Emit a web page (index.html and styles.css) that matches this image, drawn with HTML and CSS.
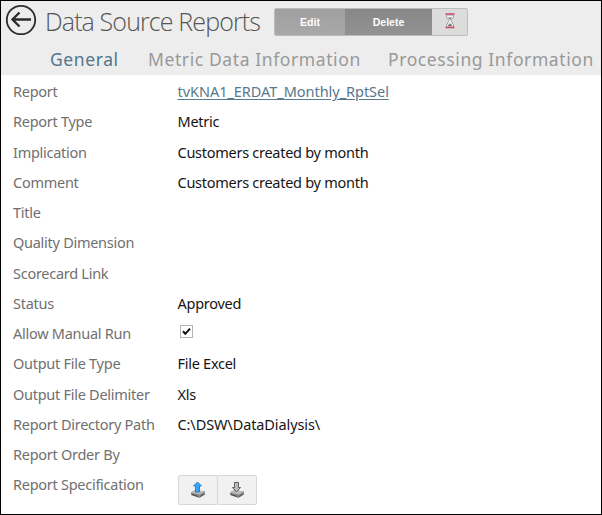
FILE: index.html
```html
<!DOCTYPE html>
<html lang="en">
<head>
<meta charset="utf-8">
<title>Data Source Reports</title>
<link rel="stylesheet" href="styles.css">
</head>
<body>
<main class="window">
  <header class="header">
    <div class="title-bar">
      <svg class="back" viewBox="0 0 32 32" role="img" aria-label="Back"><circle cx="16" cy="16" r="14.2"/><path d="M26 15.5H7.5M14.5 8.5l-7 7 7 7"/></svg>
      <h1 class="title">Data Source Reports</h1>
      <div class="actions">
        <button class="btn edit">Edit</button>
        <button class="btn delete">Delete</button>
        <button class="btn wait" aria-label="Queue">
          <svg width="10" height="16" viewBox="0 0 10 16"><path d="M1.5 2h7v2L6 7.5 8.5 12v2h-7v-2L4 7.5 1.5 4z" fill="#f4f4f4" stroke="#a2a2a2"/><path d="M3 4.5h4L5 7zM2.5 13 5 10l2.5 3z" fill="#777"/><path d="M.5 1h9M.5 14.5h9" stroke="#c94a62" stroke-width="1.6"/></svg>
        </button>
      </div>
    </div>
    <nav class="tabs"><a class="tab active">General</a><a class="tab metric">Metric Data Information</a><a class="tab processing">Processing Information</a></nav>
  </header>
  <dl class="fields">
    <dt>Report</dt><dd><a class="link">tvKNA1_ERDAT_Monthly_RptSel</a></dd>
    <dt>Report Type</dt><dd>Metric</dd>
    <dt>Implication</dt><dd>Customers created by month</dd>
    <dt>Comment</dt><dd>Customers created by month</dd>
    <dt>Title</dt><dd></dd>
    <dt>Quality Dimension</dt><dd></dd>
    <dt>Scorecard Link</dt><dd></dd>
    <dt>Status</dt><dd>Approved</dd>
    <dt>Allow Manual Run</dt><dd><svg class="check" viewBox="0 0 13 13"><rect x=".5" y=".5" width="12" height="12"/><path d="M3 6.3 5.3 8.8 10 3.6"/></svg></dd>
    <dt>Output File Type</dt><dd>File Excel</dd>
    <dt>Output File Delimiter</dt><dd>Xls</dd>
    <dt>Report Directory Path</dt><dd class="path">C:\DSW\DataDialysis\</dd>
    <dt>Report Order By</dt><dd></dd>
    <dt>Report Specification</dt>
    <dd class="files">
      <button class="file-btn" aria-label="Upload"><svg width="16" height="18" viewBox="0 0 16 18"><path d="M1 11.5 5 9l10 1.5v3L9.5 17 1 14z" fill="#888"/><path d="M1 11.5 5 9l10 1.5-5.5 3z" fill="#bbb"/><path d="M2 13.5l6 2" stroke="#444"/><path d="M10 15.5l4.5-2.5" stroke="#555"/><path d="M7.5 1 11.5 5H9.5v6h-4V5h-2z" fill="#38a5fa" stroke="#1c70ba" stroke-width=".8"/></svg></button>
      <button class="file-btn" aria-label="Download"><svg width="16" height="18" viewBox="0 0 16 18"><path d="M1 11.5 5 9l10 1.5v3L9.5 17 1 14z" fill="#888"/><path d="M1 11.5 5 9l10 1.5-5.5 3z" fill="#bbb"/><path d="M2 13.5l6 2" stroke="#444"/><path d="M10 15.5l4.5-2.5" stroke="#555"/><path d="M5.5 1.5h4v5h2l-4 4.5-4-4.5h2z" fill="#bbb" stroke="#555" stroke-width=".9"/></svg></button>
    </dd>
  </dl>
</main>
</body>
</html>
```

FILE: styles.css
```css
* { box-sizing: border-box; }
body { margin: 0; font-family: "Noto Sans", sans-serif; }
.window { width: 602px; height: 515px; border: 1px solid #000; background: #fff; overflow: hidden; }
.header { height: 74px; background: #ededed; }
.title-bar { display: flex; height: 43px; padding-left: 4px; }
.back { width: 32px; height: 32px; margin-top: 3px; fill: none; stroke: #2d2d2d; stroke-width: 1.8; }
.back path { stroke-width: 2.4; }
.title { width: 229px; margin: 3px 0 0 8px; font: 300 25px/34px "Open Sans", sans-serif; letter-spacing: -.88px; color: #555; white-space: nowrap; }
.actions { display: flex; width: 194px; height: 28px; margin-top: 7px; border: 1px solid #bcbcbc; border-radius: 2px; overflow: hidden; }
.btn { height: 26px; padding: 0; border: 0; color: #fff; font: bold 10.5px/26px "Liberation Sans", sans-serif; }
.edit { width: 70px; background: linear-gradient(#a0a0a0, #a8a8a8); }
.delete { width: 87px; background: linear-gradient(#888, #929292); }
.wait { display: flex; align-items: center; justify-content: center; width: 35px; padding-bottom: 2px; background: #dcdcdc; }
.tabs { display: flex; padding-left: 49px; font-size: 17.5px; line-height: 30px; color: #999; white-space: nowrap; }
.tab { letter-spacing: .6px; }
.active { width: 98px; color: #53758e; }
.metric { width: 240px; }
.fields { display: grid; grid-template-columns: 164.5px 1fr; grid-auto-rows: 30.25px; margin: 0; padding: 1px 0 0 12px; font-size: 14.5px; line-height: 30px; letter-spacing: -.27px; }
dt { color: #707070; white-space: nowrap; }
dd { margin: 0; color: #151515; white-space: nowrap; }
.link { letter-spacing: -.04px; color: #58788c; text-decoration: underline; text-underline-offset: 2px; }
.path { letter-spacing: -.1px; }
.check { display: block; width: 13px; height: 13px; margin: 7px 0 0 2px; fill: #fff; stroke: #b5b5b5; }
.check path { fill: none; stroke: #111; stroke-width: 2; }
.files { display: flex; padding-top: 6px; }
.file-btn { display: flex; align-items: center; justify-content: center; width: 40px; height: 30px; padding: 0; border: 1px solid #d8d8d8; border-radius: 2px; background: #f1f1f1; }
.file-btn + .file-btn { margin-left: -1px; }
```
